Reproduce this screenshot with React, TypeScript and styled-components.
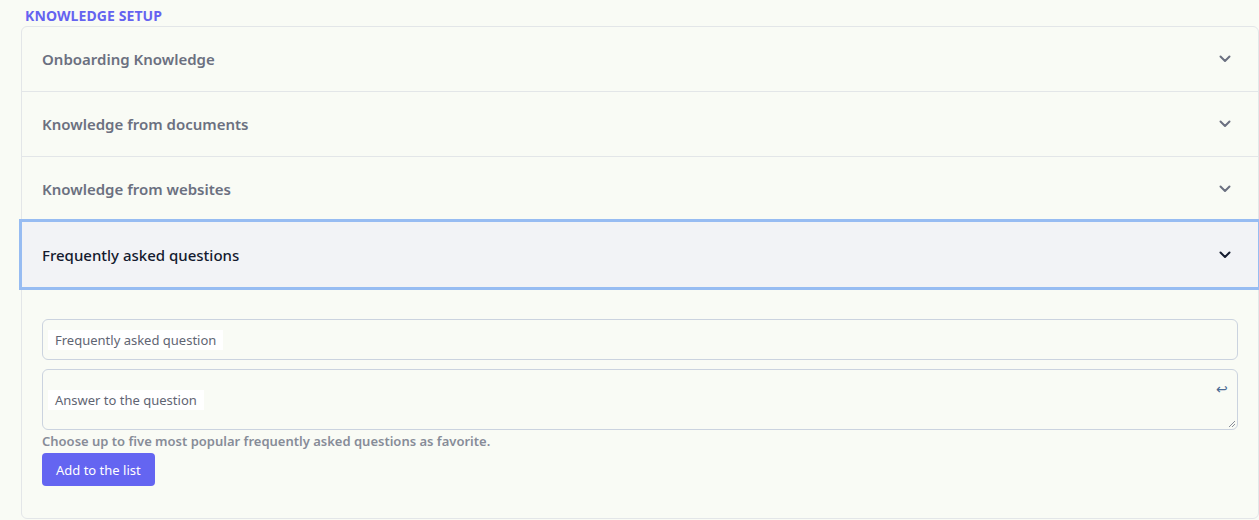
import React, { useState } from 'react'
import styled, { createGlobalStyle } from 'styled-components'

const GlobalStyle = createGlobalStyle`
	html, body {
		margin: 0;
		background-color: #f9fbf5;
		font-family: 'Noto Sans', 'Open Sans', sans-serif;
		overflow: hidden;
	}
`

const Page = styled.div`
	padding: 7px 0 0 21px;
`

const Heading = styled.h2`
	margin: 0 0 2px 4px;
	font-size: 14px;
	font-weight: 700;
	letter-spacing: 0.1px;
	line-height: 17px;
	color: #6563f0;
	text-transform: uppercase;
`

const Card = styled.div`
	width: 1238px;
	box-sizing: border-box;
	border: 1px solid #e3e6e8;
	border-radius: 6px;
	background-color: #f9fbf5;
`

const Section = styled.div`
	border-bottom: 1px solid #e3e6e8;
	&:last-child {
		border-bottom: none;
	}
`

const Header = styled.button<{ $open: boolean }>`
	display: flex;
	align-items: center;
	justify-content: space-between;
	width: 100%;
	height: ${p => (p.$open ? '65px' : '64px')};
	padding: 0 20px;
	border: none;
	background-color: ${p => (p.$open ? '#f2f3f6' : 'transparent')};
	box-shadow: ${p => (p.$open ? '0 0 0 3px #97bcf2' : 'none')};
	position: relative;
	font-family: inherit;
	font-size: 15px;
	font-weight: ${p => (p.$open ? 500 : 600)};
	color: ${p => (p.$open ? '#141a2e' : '#6b7080')};
	cursor: pointer;
	text-align: left;
	svg {
		color: ${p => (p.$open ? '#141a2e' : '#6b7080')};
		margin-right: 7px;
	}
`

const Body = styled.div`
	display: flex;
	flex-direction: column;
	padding: 32px 20px 32px;
`

const Field = styled.div<{ $tall?: boolean }>`
	position: relative;
	height: ${p => (p.$tall ? '61px' : '41px')};
	box-sizing: border-box;
	border: 1px solid #cbd3df;
	border-radius: 6px;
	& + & {
		margin-top: 9px;
	}
`

const FieldLabel = styled.span<{ $tall?: boolean }>`
	position: absolute;
	left: 5px;
	top: ${p => (p.$tall ? '20px' : '10px')};
	padding: 0 7px;
	background-color: #ffffff;
	font-size: 13px;
	line-height: 20px;
	color: #5f6573;
`

const EnterMark = styled.span`
	position: absolute;
	right: 9px;
	top: 9px;
	font-size: 14px;
	color: #4d6b94;
`

const Grip = styled.svg`
	position: absolute;
	right: 1px;
	bottom: 1px;
`

const Hint = styled.p`
	margin: 2px 0 3px;
	font-size: 13px;
	font-weight: 600;
	line-height: 18px;
	color: #878c98;
`

const AddButton = styled.button`
	align-self: flex-start;
	height: 33px;
	padding: 0 14px;
	border: none;
	border-radius: 4px;
	background-color: #6465f1;
	color: #ffffff;
	font-family: inherit;
	font-size: 13px;
`

const Chevron = () => (
	<svg width="12" height="8" viewBox="0 0 12 8" fill="none">
		<path d="M1.5 1.5L6 6l4.5-4.5" stroke="currentColor" strokeWidth="2" strokeLinecap="round" strokeLinejoin="round" />
	</svg>
)

const sections = [
	'Onboarding Knowledge',
	'Knowledge from documents',
	'Knowledge from websites',
	'Frequently asked questions',
]

export default function App() {
	const [open, setOpen] = useState(3)

	return (
		<Page>
			<GlobalStyle />
			<Heading>Knowledge setup</Heading>
			<Card>
				{sections.map((title, i) => (
					<Section key={title}>
						<Header $open={open === i} onClick={() => setOpen(open === i ? -1 : i)}>
							{title}
							<Chevron />
						</Header>
						{open === i && i === 3 && (
							<Body>
								<Field>
									<FieldLabel>Frequently asked question</FieldLabel>
								</Field>
								<Field $tall>
									<FieldLabel $tall>Answer to the question</FieldLabel>
									<EnterMark>↩</EnterMark>
									<Grip width="9" height="9" viewBox="0 0 9 9">
										<path d="M8 2L2 8M8 5L5 8" stroke="#8a8f99" strokeWidth="1" />
									</Grip>
								</Field>
								<Hint>Choose up to five most popular frequently asked questions as favorite.</Hint>
								<AddButton>Add to the list</AddButton>
							</Body>
						)}
					</Section>
				))}
			</Card>
		</Page>
	)
}
